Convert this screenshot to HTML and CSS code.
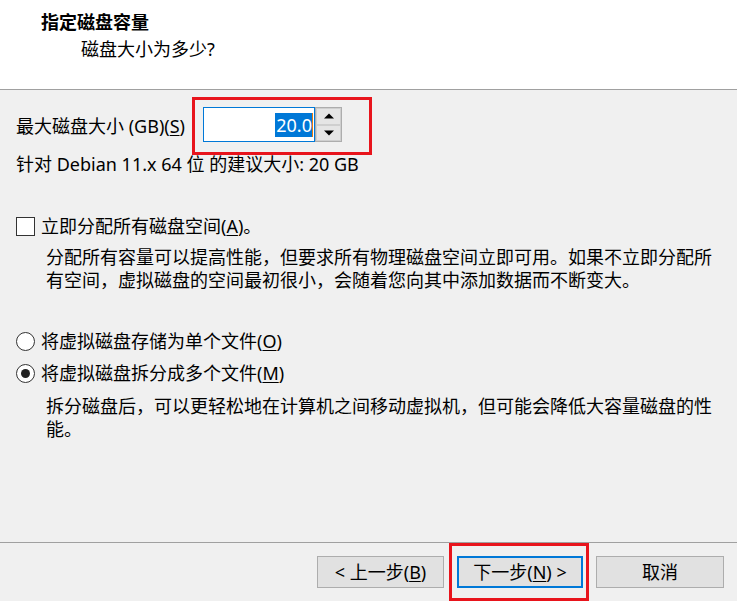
FILE: index.html
```html
<!DOCTYPE html>
<html lang="zh-CN">
<head>
<meta charset="utf-8">
<title>指定磁盘容量</title>
<link rel="stylesheet" href="styles.css">
</head>
<body>
<div class="window">
  <header class="head">
    <div class="title">指定磁盘容量</div>
    <div class="subtitle">磁盘大小为多少?</div>
  </header>
  <main class="content">
    <div class="size-row">
      <label class="size-label">最大磁盘大小 (GB)(<u>S</u>)</label>
      <div class="spin">
        <div class="spin-input"><span class="sel">20.0</span><span class="caret"></span></div>
        <div class="spin-btns">
          <div class="spin-btn"><svg width="10" height="6" viewBox="0 0 10 6"><path d="M0 5.5 L5 0.5 L10 5.5 Z" fill="#000"/></svg></div>
          <div class="spin-btn"><svg width="10" height="6" viewBox="0 0 10 6"><path d="M0 0.5 L5 5.5 L10 0.5 Z" fill="#000"/></svg></div>
        </div>
      </div>
    </div>
    <div class="hint">针对 Debian 11.x 64 位 的建议大小: 20 GB</div>
    <div class="option check-row"><span class="checkbox"></span><span>立即分配所有磁盘空间(<u>A</u>)。</span></div>
    <p class="desc first-desc">分配所有容量可以提高性能，但要求所有物理磁盘空间立即可用。如果不立即分配所<br>有空间，虚拟磁盘的空间最初很小，会随着您向其中添加数据而不断变大。</p>
    <div class="option radio-row single"><span class="radio"></span><span>将虚拟磁盘存储为单个文件(<u>O</u>)</span></div>
    <div class="option radio-row multi"><span class="radio checked"></span><span>将虚拟磁盘拆分成多个文件(<u>M</u>)</span></div>
    <p class="desc second-desc">拆分磁盘后，可以更轻松地在计算机之间移动虚拟机，但可能会降低大容量磁盘的性<br>能。</p>
  </main>
  <footer class="foot">
    <button class="btn btn-back">&lt; 上一步(<u>B</u>)</button>
    <button class="btn btn-next">下一步(<u>N</u>) &gt;</button>
    <button class="btn btn-cancel">取消</button>
  </footer>
  <div class="mark mark-spin"></div>
  <div class="mark mark-next"></div>
</div>
</body>
</html>
```

FILE: styles.css
```css
* { box-sizing: border-box; }
html, body { margin: 0; padding: 0; }
body {
  background: #f0f0f0;
  font-family: "Noto Sans", "Noto Sans CJK SC", sans-serif;
  font-size: 18px;
  color: #000;
}
u { text-decoration: underline; text-underline-offset: 2px; text-decoration-thickness: 1px; }

.window {
  position: relative;
  width: 737px;
  height: 601px;
  display: flex;
  flex-direction: column;
  overflow: hidden;
}

.head {
  height: 90px;
  background: #fff;
  border-bottom: 1px solid #a0a0a0;
  padding-top: 10px;
}
.title {
  padding-left: 41px;
  font-weight: bold;
  line-height: 24px;
}
.subtitle {
  margin-top: 3px;
  padding-left: 81px;
  line-height: 24px;
}

.content {
  flex: 1;
  padding-left: 16px;
}

.size-row {
  margin-top: 17px;
  display: flex;
  align-items: center;
  height: 35px;
}
.size-label { line-height: 24px; padding-top: 3px; }
.spin {
  margin-left: auto;
  margin-right: 395px;
  display: flex;
  height: 35px;
}
.spin-input {
  width: 112px;
  height: 35px;
  border: 1px solid #0078d7;
  background: #fff;
  display: flex;
  justify-content: flex-end;
  align-items: center;
  padding-right: 1px;
}
.sel {
  background: #0078d7;
  color: #fff;
  line-height: 24px;
  height: 24px;
  padding: 0 0 0 1px;
}
.caret {
  width: 1px;
  height: 24px;
  background: #e07a10;
}
.spin-btns {
  width: 27px;
  display: flex;
  flex-direction: column;
  border: 1px solid #adadad;
  background: #e5e5e5;
}
.spin-btn {
  flex: 1;
  display: flex;
  align-items: center;
  justify-content: center;
  border: 1px solid #cfcfcf;
}

.hint {
  margin-top: 10px;
  line-height: 24px;
}

.option {
  display: flex;
  align-items: center;
  line-height: 24px;
}
.check-row { margin-top: 38px; }
.checkbox {
  width: 19px;
  height: 19px;
  border: 1px solid #333;
  background: #fff;
  margin-right: 6px;
}
.radio {
  width: 19px;
  height: 19px;
  border: 1px solid #333;
  border-radius: 50%;
  background: #fff;
  margin-right: 6px;
  display: flex;
  align-items: center;
  justify-content: center;
}
.radio.checked::after {
  content: "";
  width: 9px;
  height: 9px;
  border-radius: 50%;
  background: #222;
}

.desc {
  margin: 0;
  padding-left: 30px;
  line-height: 23px;
}
.first-desc { margin-top: 8px; }
.single { margin-top: 37px; }
.multi { margin-top: 8px; }
.second-desc { margin-top: 10px; }

.foot {
  height: 59px;
  border-top: 1px solid #a0a0a0;
  display: flex;
  justify-content: flex-end;
  align-items: flex-start;
  gap: 13px;
  padding: 13px 13px 0 0;
}
.btn {
  height: 32px;
  border: 1px solid #adadad;
  background: #e1e1e1;
  font-family: inherit;
  font-size: 18px;
  color: #000;
  padding: 0;
  line-height: 24px;
}
.btn-back { width: 127px; }
.btn-next { width: 126px; border: 2px solid #0078d7; }
.btn-cancel { width: 128px; }

.mark {
  position: absolute;
  border: 3px solid #e8141c;
}
.mark-spin { left: 192px; top: 97px; width: 180px; height: 58px; }
.mark-next { left: 449px; top: 543px; width: 140px; height: 58px; }
```
